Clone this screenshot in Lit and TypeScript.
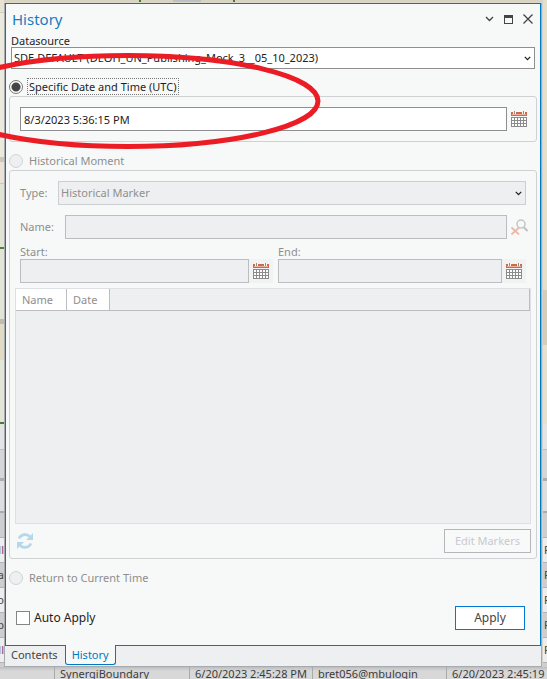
import { LitElement, html, css, svg } from "lit";
import { customElement, state } from "lit/decorators.js";

const chevron = html`<svg class="chevron" width="7" height="5" viewBox="0 0 7 5" aria-hidden="true">
  <path d="M.8 .9 3.5 3.6 6.2 .9" fill="none" stroke="currentColor" stroke-width="1.3" />
</svg>`;

const calendar = html`<svg width="16" height="16" viewBox="0 0 16 16" shape-rendering="crispEdges" aria-hidden="true">
  <path d="M0 1h16v4H0z" fill="#cb6a4a" />
  <path d="M1 3h14v1H1z" fill="#f0b09c" />
  <path d="M2 0h3v3H2zM11 0h3v3h-3z" fill="#f7f8f8" />
  <path d="M3 0h1v3H3zM12 0h1v3h-1z" fill="#8a8a8a" />
  <path d="M0 6h16v10H0z" fill="#8b8b8b" />
  ${[1, 4, 7, 10, 13].map((x) => [7, 10, 13].map((y) => svg`<rect x=${x} y=${y} width="2" height="2" fill="#fff" />`))}
</svg>`;

@customElement("app-root")
export class AppRoot extends LitElement {
  @state() private mode = "specific";

  static styles = css`
    :host {
      display: grid;
      position: relative;
      grid-template-columns: 4px minmax(0, 1fr) 5px;
      grid-template-rows: 2px 1fr 12px;
      min-height: 100vh;
      overflow: hidden;
      font: 11px/14px "Noto Sans", "Open Sans", sans-serif;
      color: #1e1e1e;
      background: #ddd9c8;
    }
    * { box-sizing: border-box; }
    button, input, select { font: inherit; color: inherit; margin: 0; border-radius: 0; }
    button { padding: 0; }
    svg { display: block; }

    .strip { grid-row: 1 / 3; contain: size; display: flex; flex-direction: column; overflow: hidden; white-space: nowrap; }
    .left { grid-column: 1; }
    .right { grid-column: 3; padding-left: 1px; background: #d2d2d0; }
    .map { flex: 0 0 424px; background: linear-gradient(#e8e2d2 0 12px, #d2ccbc 12px 13px, #eceadc 13px 157px, #c9c9c0 157px 162px, #ece3d6 162px 183px, #c9c9ba 183px 184px, #e2e4d3 184px 247px, #4f8233 247px 249px, #e2e4d6 249px 319px, #bdbcae 319px 324px, #e0dbc2 324px 360px, #e2e6d6 360px 422px, #4a7c2c 422px 424px); }
    .right .map { background: linear-gradient(#e6e0c9 0 290px, #d5cdb6 290px 345px, #e6e0cc 345px 424px); }
    .chrome { flex: 0 0 89px; background: linear-gradient(#e4e4e4 0 25px, #bfbfbf 25px 26px, #d6d6d6 26px 54px, #adadad 54px 57px, #dedede 57px 87px, #ababab 87px 89px); }
    .cell { flex: 0 0 25px; line-height: 24px; border-bottom: 1px solid #b3b3b3; background: #cecece; color: #444; padding-left: 1px; overflow: hidden; }
    .cell:nth-child(even) { background: #ededed; }
    .left .cell { display: flex; justify-content: flex-end; padding: 0; }
    .purple { color: #7a3f70; }
    .top { grid-column: 2; grid-row: 1; display: flex; padding-left: 135px; gap: 32px; background: #d9d5c5; }
    .top i { flex: none; width: 2px; background: #4b7a2c; }
    .top .block { width: 28px; background: #bcc0c8; }

    .under { grid-column: 1 / 4; grid-row: 3; display: grid; grid-template-columns: 55px 135px 123px 134px 1fr; background: linear-gradient(#bdbdbd, #d8d8d8 4px); overflow: hidden; white-space: nowrap; color: #3c3c3c; }
    .under span { border-right: 1px solid #aaa; padding-left: 5px; line-height: 14px; overflow: hidden; }
    .under span:last-child { border: 0; }

    .panel { grid-column: 2; grid-row: 2; display: flex; flex-direction: column; border: 1px solid #a5abb1; border-top: 0; background: #eeeff1; margin-top: 1px; min-width: 0; }
    .body { flex: 1; display: flex; flex-direction: column; border: 1px solid #0079c1; background: #f7f9f8; padding: 0 3px 15px; }
    .title { display: flex; align-items: center; height: 30px; padding-left: 3px; }
    h1 { flex: 1; margin: 0; font-size: 15px; line-height: 20px; font-weight: 400; color: #1b7bbf; }
    .title button { width: 19px; height: 18px; border: 0; background: none; display: grid; place-items: center; color: #444; }
    .source { padding: 0 2px; display: flex; flex-direction: column; }
    .source label { line-height: 13px; }

    .combo { position: relative; display: flex; flex: 1; height: 24px; color: #222; }
    .source .combo { flex: none; height: 22px; }
    .combo select { appearance: none; width: 100%; padding: 0 2px; border: 1px solid #8f8f92; background: #fff; outline: 0; }
    .combo select:disabled { border-color: #cdced2; background: #eeeff0; color: #8f8f8f; opacity: 1; }
    .chevron { position: absolute; right: 4px; top: 50%; margin-top: -2px; pointer-events: none; }

    .choice { display: flex; align-items: center; height: 15px; margin: 10px 0 2px; }
    .choice label { line-height: 15px; padding: 0 1px; margin-left: 4px; border: 1px dotted transparent; }
    .choice .focus { border-color: #777; }
    .muted { color: #8e8e8e; }
    input[type="radio"] { appearance: none; flex: none; width: 14px; height: 14px; border: 1px solid #d2d3d5; border-radius: 50%; background: #eeeff0; }
    input[type="radio"]:checked { border-color: #777; background: radial-gradient(#444 0 4px, #fff 5px); }

    fieldset { min-width: 0; margin: 0 0 1px; border: 1px solid #d0d1d4; border-radius: 3px; padding: 10px 5px 5px; color: #8e8e8e; }
    .single { padding-bottom: 10px; color: #1e1e1e; }
    .moment { flex: 1; display: flex; flex-direction: column; }
    .row { display: flex; align-items: center; padding-left: 5px; }
    .row + .row { margin-top: 10px; }
    .type { padding-right: 5px; }
    .type label { width: 38px; }
    .name label { width: 45px; }
    .text { flex: 1; min-width: 0; height: 24px; padding: 0 3px; border: 1px solid #8f8f92; background: #fff; outline: 0; }
    .text:disabled { border-color: #bcbdc2; background: #eeeff0; }
    .icon { flex: none; width: 24px; height: 24px; border: 0; background: none; display: grid; place-items: center; }
    .range { display: grid; grid-template-columns: 101fr 99fr; gap: 5px; padding: 0 5px; margin: 6px 0 5px; }
    .range .icon { background: #f1f2f2; }
    .range label { display: block; }
    .date { display: flex; }

    .list { flex: 1; min-height: 120px; border: 1px solid #dfe0e3; background: #eeeff0; }
    table { width: 100%; border-collapse: separate; border-spacing: 0; }
    th { height: 22px; padding: 0 6px; text-align: left; font-weight: 400; background: #fff; border: solid #bcbdc2; border-width: 0 1px 1px 0; }
    .c1 { width: 51px; }
    .c2 { width: 43px; }
    .rest { background: #eeeff0; }
    .foot { display: flex; align-items: center; justify-content: space-between; margin-top: 5px; }
    .foot .icon { width: 20px; }
    .edit { width: 87px; height: 24px; border: 1px solid #b5b6b8; background: #f8f9f9; color: #c9cacc; }
    .actions { display: flex; align-items: center; justify-content: space-between; margin-top: 19px; padding: 0 12px 0 7px; font-size: 12px; }
    .auto { display: flex; align-items: center; gap: 4px; }
    .auto input { appearance: none; width: 14px; height: 14px; border: 1px solid #858585; background: #fff; }
    .auto input:checked { background: #0079c1; }
    .apply { width: 70px; height: 24px; border: 1px solid #0078d4; background: #fff; color: #444; }

    nav { display: flex; height: 21px; margin-top: -1px; padding-bottom: 1px; }
    nav a { padding: 0 7px 0 6px; line-height: 20px; text-decoration: none; color: #444; }
    nav .on { border: 1px solid #0079c1; border-top: 0; border-radius: 0 0 3px 3px; background: #f7f9f8; color: #0079c1; padding: 0 6px; }
    .mark { position: absolute; left: 0; top: 0; pointer-events: none; }
  `;

  private radio(id: string, text: string) {
    const on = this.mode === id;
    return html`<div class="choice">
      <input type="radio" name="mode" id=${id} .checked=${on} @change=${() => (this.mode = id)} />
      <label for=${id} class=${on ? "focus" : "muted"}>${text}</label>
    </div>`;
  }

  render() {
    return html`
      <div class="strip left">
        <div class="map"></div><div class="chrome"></div>
        <div class="cell"></div><div class="cell purple">ll</div><div class="cell">ta</div><div class="cell">o</div>
        <div class="cell">p</div><div class="cell purple">ll</div><div class="cell"></div>
      </div>
      <div class="top"><i></i><i class="block"></i><i></i></div>
      <div class="strip right">
        <div class="map"></div><div class="chrome"></div>
        <div class="cell"></div>${[1, 2, 3, 4, 5].map(() => html`<div class="cell">P</div>`)}<div class="cell"></div>
      </div>

      <main class="panel">
        <div class="body">
          <header class="title">
            <h1>History</h1>
            <button aria-label="Menu"><svg width="9" height="6" viewBox="0 0 9 6"><path d="M1 1l3.500 3.500L8 1" fill="none" stroke="currentColor" stroke-width="1.400" /></svg></button>
            <button aria-label="Maximize"><svg width="9" height="9" viewBox="0 0 9 9" shape-rendering="crispEdges"><path d="M0 0h9v9H0zM1 3v5h7V3z" fill="currentColor" fill-rule="evenodd" /></svg></button>
            <button aria-label="Close"><svg width="10" height="10" viewBox="0 0 10 10"><path d="M.5.500l9 9M9.500.500l-9 9" stroke="currentColor" stroke-width="1.300" /></svg></button>
          </header>

          <div class="source">
            <label for="source">Datasource</label>
            <div class="combo">
              <select id="source"><option>SDE.DEFAULT (DEOH_UN_Publishing_Mock_3__05_10_2023)</option></select>
              ${chevron}
            </div>
          </div>

          ${this.radio("specific", "Specific Date and Time (UTC)")}
          <fieldset class="single">
            <div class="row">
              <input class="text" type="text" aria-label="Date and time" value="8/3/2023 5:36:15 PM" />
              <button class="icon" aria-label="Pick a date">${calendar}</button>
            </div>
          </fieldset>

          ${this.radio("moment", "Historical Moment")}
          <fieldset class="moment" ?disabled=${this.mode !== "moment"}>
            <div class="row type">
              <label for="type">Type:</label>
              <div class="combo"><select id="type"><option>Historical Marker</option></select>${chevron}</div>
            </div>
            <div class="row name">
              <label for="name">Name:</label>
              <input class="text" id="name" type="text" />
              <button class="icon" aria-label="Clear search">
                <svg width="18" height="16" viewBox="0 0 18 16" fill="none">
                  <circle cx="11" cy="5" r="4" stroke="#c3c5c7" stroke-width="1.500" />
                  <path d="M13.500 8l4 4" stroke="#bfc1c3" stroke-width="2" />
                  <path d="M1.500 8.500l7.500 7M9 8.500l-7.500 7" stroke="#ebb9a9" stroke-width="1.800" />
                </svg>
              </button>
            </div>
            <div class="range">
              <div><label for="start">Start:</label>
                <div class="date"><input class="text" id="start" type="text" /><button class="icon" aria-label="Pick start">${calendar}</button></div></div>
              <div><label for="end">End:</label>
                <div class="date"><input class="text" id="end" type="text" /><button class="icon" aria-label="Pick end">${calendar}</button></div></div>
            </div>
            <div class="list">
              <table><thead><tr><th class="c1">Name</th><th class="c2">Date</th><th class="rest"></th></tr></thead></table>
            </div>
            <div class="foot">
              <button class="icon" aria-label="Refresh">
                <svg width="16" height="16" viewBox="0 0 16 16" fill="none" stroke="#b5d8ee" stroke-width="2.600">
                  <path d="M2 5.500C4 1 10.500 0 13.500 4.500M14 10.500C12 15 5.500 16 2.500 11.500" />
                  <path d="M16 0v7H9zM0 16V9h7z" fill="#b5d8ee" stroke="none" />
                </svg>
              </button>
              <button class="edit">Edit Markers</button>
            </div>
          </fieldset>

          ${this.radio("current", "Return to Current Time")}
          <div class="actions">
            <div class="auto"><input type="checkbox" id="auto" /><label for="auto">Auto Apply</label></div>
            <button class="apply">Apply</button>
          </div>
        </div>
        <nav><a href="#contents">Contents</a><a class="on" href="#history">History</a></nav>
      </main>

      <div class="under"><span></span><span>SynergiBoundary</span><span>6/20/2023 2:45:28 PM</span><span>bret056@mbulogin</span><span>6/20/2023 2:45:19 PM</span></div>

      <svg class="mark" width="330" height="160" viewBox="0 0 330 160" aria-hidden="true">
        <ellipse cx="128" cy="101" rx="190" ry="45.500" fill="none" stroke="#ec1c24" stroke-width="5" />
      </svg>
    `;
  }
}
